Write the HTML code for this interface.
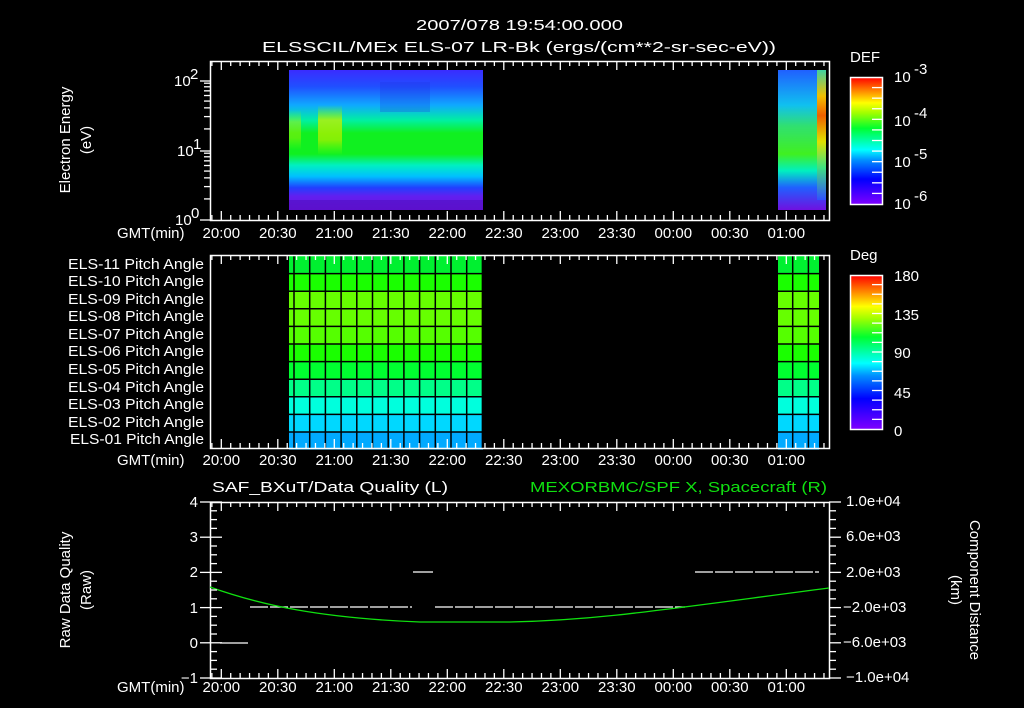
<!DOCTYPE html>
<html><head><meta charset="utf-8"><style>
html,body{margin:0;padding:0;background:#000;width:1024px;height:708px;overflow:hidden}
svg{display:block}
text{font-family:"Liberation Sans","DejaVu Sans",sans-serif;fill:#fff;font-size:15px}
</style></head><body>
<svg id="s" width="1024" height="708" viewBox="0 0 1024 708" xmlns="http://www.w3.org/2000/svg">
<defs>
<linearGradient id="spec" x1="0" y1="0" x2="0" y2="1">
<stop offset="0" stop-color="#3a2cff"/>
<stop offset="0.12" stop-color="#2050ff"/>
<stop offset="0.25" stop-color="#10a8ff"/>
<stop offset="0.36" stop-color="#00f0a0"/>
<stop offset="0.45" stop-color="#10f020"/>
<stop offset="0.6" stop-color="#10f020"/>
<stop offset="0.68" stop-color="#00f0c0"/>
<stop offset="0.76" stop-color="#00c0ff"/>
<stop offset="0.84" stop-color="#2040ff"/>
<stop offset="0.9" stop-color="#6020f0"/>
<stop offset="1" stop-color="#7010e0"/>
</linearGradient>
<linearGradient id="spec2" x1="0" y1="0" x2="0" y2="1">
<stop offset="0" stop-color="#2060ff"/>
<stop offset="0.25" stop-color="#10c0f0"/>
<stop offset="0.4" stop-color="#30e070"/>
<stop offset="0.6" stop-color="#40f020"/>
<stop offset="0.72" stop-color="#00f0c0"/>
<stop offset="0.84" stop-color="#2060ff"/>
<stop offset="1" stop-color="#7010e0"/>
</linearGradient>
<linearGradient id="hot" x1="0" y1="0" x2="0" y2="1">
<stop offset="0" stop-color="#40d0a0"/>
<stop offset="0.2" stop-color="#f0c000"/>
<stop offset="0.35" stop-color="#f06000"/>
<stop offset="0.55" stop-color="#e0e000"/>
<stop offset="0.75" stop-color="#40e080"/>
<stop offset="1" stop-color="#3050ff"/>
</linearGradient>
<linearGradient id="yel" x1="0" y1="0" x2="0" y2="1">
<stop offset="0" stop-color="#80ff00" stop-opacity="0"/>
<stop offset="0.3" stop-color="#c0f000" stop-opacity="0.8"/>
<stop offset="0.7" stop-color="#a0f000" stop-opacity="0.8"/>
<stop offset="1" stop-color="#80ff00" stop-opacity="0"/>
</linearGradient>
<linearGradient id="cb" x1="0" y1="1" x2="0" y2="0">
<stop offset="0" stop-color="#8000ff"/>
<stop offset="0.2" stop-color="#0000ff"/>
<stop offset="0.35" stop-color="#0090ff"/>
<stop offset="0.43" stop-color="#00ffff"/>
<stop offset="0.6" stop-color="#00ff30"/>
<stop offset="0.72" stop-color="#a0ff00"/>
<stop offset="0.8" stop-color="#ffff00"/>
<stop offset="0.9" stop-color="#ff8000"/>
<stop offset="1" stop-color="#ff0000"/>
</linearGradient>
</defs>

<text x="416" y="30" textLength="207" lengthAdjust="spacingAndGlyphs" font-size="16">2007/078 19:54:00.000</text>
<text x="262" y="52" textLength="514" lengthAdjust="spacingAndGlyphs" font-size="16">ELSSCIL/MEx ELS-07 LR-Bk  (ergs/(cm**2-sr-sec-eV))</text>

<rect x="289" y="70" width="194" height="140" fill="url(#spec)"/>
<rect x="318" y="105" width="24" height="50" fill="url(#yel)"/>
<rect x="289" y="110" width="12" height="40" fill="url(#yel)" opacity="0.6"/>
<rect x="380" y="82" width="50" height="30" fill="#2030e0" opacity="0.25"/>
<rect x="289" y="200" width="194" height="10" fill="#5010c0" opacity="0.6"/>
<rect x="778" y="70" width="48" height="140" fill="url(#spec2)"/>
<rect x="817" y="70" width="9" height="130" fill="url(#hot)"/>

<rect x="210.5" y="61.5" width="619" height="159" fill="none" stroke="#fff" stroke-width="1.5"/>
<text x="174" y="86" font-size="13">10</text><text x="190" y="79" font-size="9">2</text>
<text x="177" y="156" font-size="13">10</text><text x="193" y="149" font-size="9">1</text>
<text x="175" y="225" font-size="13">10</text><text x="191" y="218" font-size="9">0</text>
<text transform="translate(70,140) rotate(-90)" text-anchor="middle" font-size="15">Electron Energy</text>
<text transform="translate(91,140) rotate(-90)" text-anchor="middle" font-size="15">(eV)</text>

<text x="850" y="62" font-size="17">DEF</text>
<rect x="850.5" y="77.5" width="32" height="127" fill="url(#cb)" stroke="#fff" stroke-width="1.5"/>
<text x="894" y="82" font-size="17">10</text><text x="914" y="74" font-size="11">-3</text>
<text x="894" y="126" font-size="17">10</text><text x="914" y="118" font-size="11">-4</text>
<text x="894" y="167" font-size="17">10</text><text x="914" y="159" font-size="11">-5</text>
<text x="894" y="209" font-size="17">10</text><text x="914" y="201" font-size="11">-6</text>

<g id="p2"></g>
<rect x="210.5" y="255.5" width="619" height="193" fill="none" stroke="#fff" stroke-width="1.5"/>
<g font-size="13">
<text x="68" y="269" textLength="136" lengthAdjust="spacingAndGlyphs">ELS-11 Pitch Angle</text>
<text x="68" y="286" textLength="136" lengthAdjust="spacingAndGlyphs">ELS-10 Pitch Angle</text>
<text x="68" y="304" textLength="136" lengthAdjust="spacingAndGlyphs">ELS-09 Pitch Angle</text>
<text x="68" y="321" textLength="136" lengthAdjust="spacingAndGlyphs">ELS-08 Pitch Angle</text>
<text x="68" y="339" textLength="136" lengthAdjust="spacingAndGlyphs">ELS-07 Pitch Angle</text>
<text x="68" y="356" textLength="136" lengthAdjust="spacingAndGlyphs">ELS-06 Pitch Angle</text>
<text x="68" y="374" textLength="136" lengthAdjust="spacingAndGlyphs">ELS-05 Pitch Angle</text>
<text x="68" y="392" textLength="136" lengthAdjust="spacingAndGlyphs">ELS-04 Pitch Angle</text>
<text x="68" y="409" textLength="136" lengthAdjust="spacingAndGlyphs">ELS-03 Pitch Angle</text>
<text x="68" y="427" textLength="136" lengthAdjust="spacingAndGlyphs">ELS-02 Pitch Angle</text>
<text x="70" y="444" textLength="134" lengthAdjust="spacingAndGlyphs">ELS-01 Pitch Angle</text>
</g>
<text x="850" y="260" font-size="17">Deg</text>
<rect x="850.5" y="275.5" width="32" height="154" fill="url(#cb)" stroke="#fff" stroke-width="1.5"/>
<text x="894" y="281" font-size="17">180</text>
<text x="894" y="320" font-size="17">135</text>
<text x="894" y="358" font-size="17">90</text>
<text x="894" y="398" font-size="17">45</text>
<text x="894" y="436" font-size="17">0</text>

<text x="212" y="492" font-size="15" textLength="236" lengthAdjust="spacingAndGlyphs">SAF_BXuT/Data Quality (L)</text>
<text x="530" y="492" font-size="15" style="fill:#10e010" textLength="297" lengthAdjust="spacingAndGlyphs">MEXORBMC/SPF X, Spacecraft (R)</text>
<rect x="210.5" y="502.5" width="619" height="176" fill="none" stroke="#fff" stroke-width="1.5"/>
<g font-size="14" text-anchor="end">
<text x="198" y="507">4</text><text x="198" y="542">3</text><text x="198" y="577">2</text>
<text x="198" y="613">1</text><text x="198" y="648">0</text><text x="198" y="683">−1</text>
</g>
<g font-size="13">
<text x="846" y="506">1.0e+04</text><text x="846" y="541">6.0e+03</text><text x="846" y="577">2.0e+03</text>
<text x="843" y="612">−2.0e+03</text><text x="843" y="647">−6.0e+03</text><text x="846" y="682">−1.0e+04</text>
</g>
<text transform="translate(70,590) rotate(-90)" text-anchor="middle" font-size="15">Raw Data Quality</text>
<text transform="translate(91,590) rotate(-90)" text-anchor="middle" font-size="15">(Raw)</text>
<text transform="translate(970,590) rotate(90)" text-anchor="middle" font-size="15">Component Distance</text>
<text transform="translate(951,590) rotate(90)" text-anchor="middle" font-size="15">(km)</text>
<g stroke="#fff" stroke-width="1.3" fill="none">
<path d="M220 643H248"/>
<path d="M250 607H412" stroke-dasharray="18 2"/>
<path d="M435 607H685" stroke-dasharray="18 2"/>
<path d="M413 572H433"/>
<path d="M695 572H819" stroke-dasharray="18 2"/>
</g>
<path d="M210 587 C 260 605, 320 618, 420 622 L 510 622 C 600 620, 660 610, 829 588" fill="none" stroke="#10e010" stroke-width="1.3"/>
<g id="ticks" stroke="#fff" stroke-width="1.3"></g>
</svg>
<script>
var NS="http://www.w3.org/2000/svg",s=document.getElementById('s');
function el(t,a,p){var e=document.createElementNS(NS,t);for(var k in a)e.setAttribute(k,a[k]);(p||s).appendChild(e);return e;}
var tk=document.getElementById('ticks');
var x0=210,ppm=113/60;
function X(min){return x0+min*ppm;}
[[61,220],[255,448],[502,678]].forEach(function(p){
 for(var m=1;m<=6*60;m+=5){var x=X(m);if(x>829)break;var L=((m+54)%30==0)?9:5;
  el('line',{x1:x,x2:x,y1:p[0],y2:p[0]+L},tk);el('line',{x1:x,x2:x,y1:p[1],y2:p[1]-L},tk);}
});
[81,151,220].forEach(function(v){el('line',{x1:200,x2:210,y1:v,y2:v},tk)});
for(var d=0;d<2;d++){for(var k=2;k<10;k++){var y=220-70*d-70*Math.log10(k);el('line',{x1:204,x2:210,y1:y,y2:y},tk);}}
for(var i=0;i<=20;i++){var y=502+i*8.8;var L=(i%4==0)?12:7;el('line',{x1:210,x2:210+L,y1:y,y2:y},tk);el('line',{x1:829,x2:829+L,y1:y,y2:y},tk);if(i%4==0)el('line',{x1:200,x2:210,y1:y,y2:y},tk);}
for(var i=1;i<12;i++){var y=77+i*127/12;el('line',{x1:872,x2:882,y1:y,y2:y},tk);}
for(var i=1;i<16;i++){var y=275+i*154/16;el('line',{x1:872,x2:882,y1:y,y2:y},tk);}
var labs=["20:00","20:30","21:00","21:30","22:00","22:30","23:00","23:30","00:00","00:30","01:00"];
[238,465,692].forEach(function(yy){
 el('text',{x:117,y:yy,'font-size':14},s).textContent="GMT(min)";
 labs.forEach(function(l,i){var t=el('text',{x:X(6+30*i),y:yy,'text-anchor':'middle','font-size':14},s);t.textContent=l;});
});
var cols=["#00f030","#1aff00","#66ff00","#66ff00","#55ff00","#1aff00","#00ff30","#00ff88","#00ffdd","#00d8ff","#00aaff"];
var p2=document.getElementById('p2');
[[289,483,294,15.7],[778,819,777,15.7]].forEach(function(r){
 for(var i=0;i<11;i++){el('rect',{x:r[0],y:256+i*17.6,width:r[1]-r[0],height:17.6,fill:cols[i]},p2);}
 for(var i=1;i<11;i++){el('line',{x1:r[0],x2:r[1],y1:256+i*17.6,y2:256+i*17.6,stroke:'#000','stroke-width':1.5},p2);}
 for(var x=r[2];x<=r[1];x+=r[3]){el('line',{x1:x,x2:x,y1:256,y2:448,stroke:'#000','stroke-width':1.5},p2);}
});
</script>
</body></html>
